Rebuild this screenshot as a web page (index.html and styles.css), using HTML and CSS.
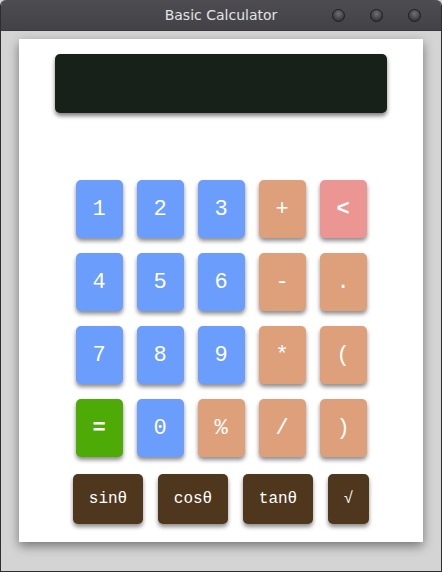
FILE: index.html
```html
<!DOCTYPE html>
<html>
<head>
<meta charset="utf-8">
<link rel="stylesheet" href="styles.css">
</head>
<body>
<div class="window">
  <div class="titlebar">
    <span class="title">Basic Calculator</span>
    <div class="controls">
      <span class="dot"></span><span class="dot"></span><span class="dot"></span>
    </div>
  </div>
  <div class="content">
    <div class="card">
      <div class="display"></div>
      <div class="keys">
        <button class="key blue">1</button>
        <button class="key blue">2</button>
        <button class="key blue">3</button>
        <button class="key orange">+</button>
        <button class="key pink bold">&lt;</button>
        <button class="key blue">4</button>
        <button class="key blue">5</button>
        <button class="key blue">6</button>
        <button class="key orange">-</button>
        <button class="key orange">.</button>
        <button class="key blue">7</button>
        <button class="key blue">8</button>
        <button class="key blue">9</button>
        <button class="key orange">*</button>
        <button class="key orange">(</button>
        <button class="key green bold">=</button>
        <button class="key blue">0</button>
        <button class="key orange">%</button>
        <button class="key orange">/</button>
        <button class="key orange">)</button>
      </div>
      <div class="funcs">
        <button class="fn">sinθ</button>
        <button class="fn">cosθ</button>
        <button class="fn">tanθ</button>
        <button class="fn sqrt">√</button>
      </div>
    </div>
  </div>
</div>
</body>
</html>
```

FILE: styles.css
```css
* { box-sizing: border-box; }
html, body { margin: 0; padding: 0; background: #d4d4d4; }
.window {
  width: 442px;
  height: 572px;
  display: flex;
  flex-direction: column;
  background: #d4d4d4;
  border-left: 1px solid #2e2e30;
  border-right: 1px solid #2e2e30;
  border-bottom: 1px solid #2e2e30;
  border-radius: 6px 6px 0 0;
  overflow: hidden;
}
.titlebar {
  height: 31px;
  flex: none;
  background: linear-gradient(#4d4d51, #434347);
  display: flex;
  align-items: center;
  justify-content: center;
  position: relative;
  border-bottom: 1px solid #3a3a3d;
}
.title {
  font-family: "DejaVu Sans", sans-serif;
  font-size: 14px;
  color: #e2e4e8;
}
.controls {
  position: absolute;
  right: 20px;
  top: 9px;
  display: flex;
  gap: 25px;
}
.dot {
  width: 13px;
  height: 13px;
  border-radius: 50%;
  background: radial-gradient(circle at 50% 35%, #707074, #3a3a3d 70%);
  border: 1px solid #1e1e20;
}
.content {
  flex: 1;
  padding: 8px 18px 0 18px;
}
.card {
  width: 404px;
  height: 503px;
  background: #fff;
  box-shadow: 0 4px 10px rgba(0,0,0,0.45);
  padding: 15px 0 0 0;
  display: flex;
  flex-direction: column;
  align-items: center;
}
.display {
  width: 332px;
  height: 59px;
  background: #17211a;
  border-radius: 5px;
  box-shadow: 0 3px 4px rgba(0,0,0,0.5);
}
.keys {
  margin-top: 67px;
  display: grid;
  grid-template-columns: repeat(5, 47px);
  grid-auto-rows: 58px;
  column-gap: 14px;
  row-gap: 15px;
}
button {
  border: none;
  padding: 0;
  margin: 0;
  color: #fff;
  font-family: "Liberation Mono", monospace;
  cursor: pointer;
}
.key {
  border-radius: 5px;
  font-size: 22px;
  box-shadow: 0 3px 4px rgba(0,0,0,0.45);
}
.bold { font-weight: bold; }
.blue { background: #6a9dfc; }
.orange { background: #dea07a; }
.pink { background: #ec9694; }
.green { background: #4eaa06; }
.funcs {
  margin-top: 17px;
  display: flex;
  gap: 15px;
}
.fn {
  width: 70px;
  height: 50px;
  background: #4f371d;
  border-radius: 5px;
  font-size: 16px;
  box-shadow: 0 3px 4px rgba(0,0,0,0.45);
}
.fn.sqrt { width: 41px; }
```
